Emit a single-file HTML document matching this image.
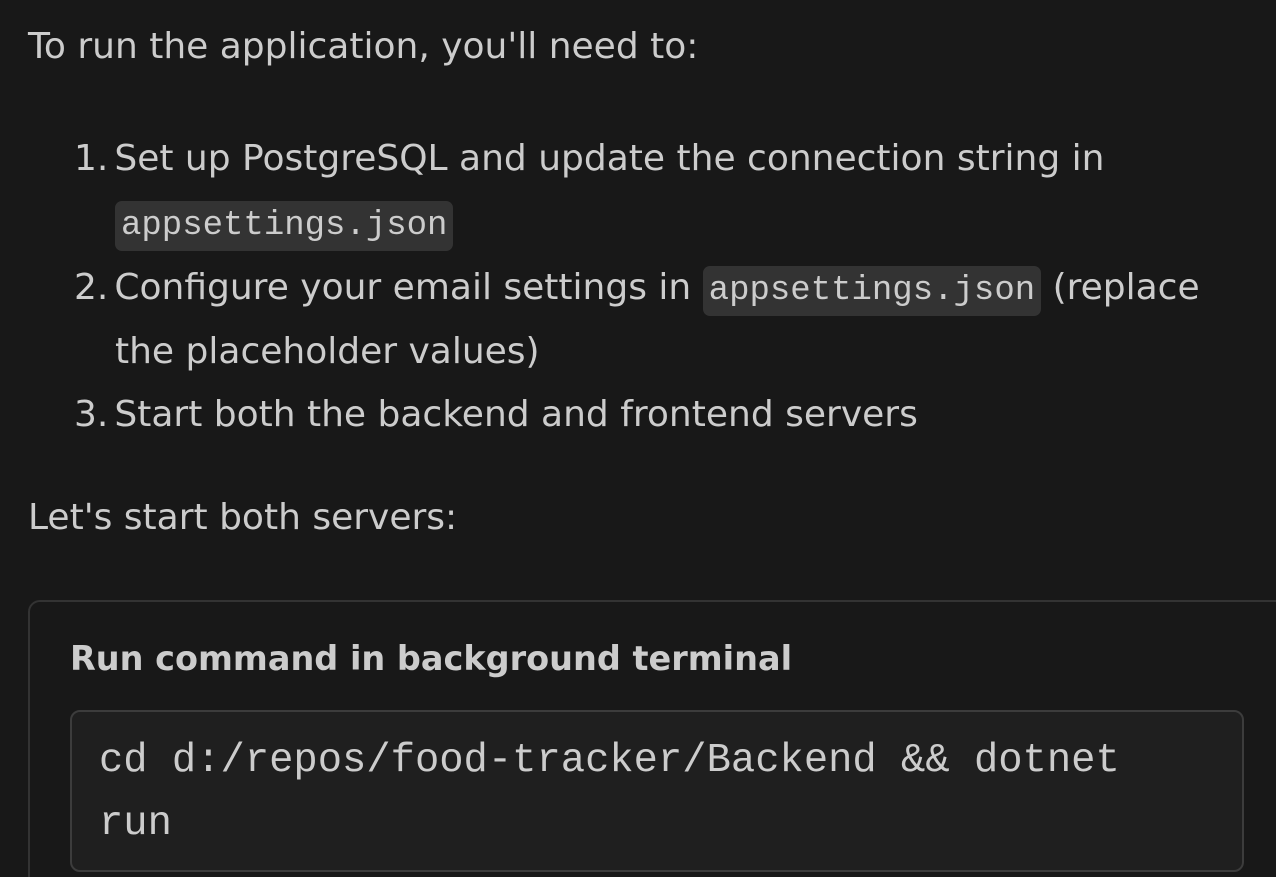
<!DOCTYPE html><html><head><style>
html,body{margin:0;width:1276px;height:877px;overflow:hidden;background:#181818;}
body{color:#cccccc;font-family:"DejaVu Sans","Liberation Sans",sans-serif;font-size:36px;position:relative}
.p{position:absolute;left:28px;white-space:nowrap}
.l{position:absolute;white-space:nowrap}
code{font-family:"Liberation Mono",monospace;font-size:34px;background:#333333;border-radius:7px;padding:6px 6px;}
.box{position:absolute;left:28px;top:600px;width:1270px;height:290px;border:2px solid #333;border-radius:12px;background:#181818}
.h{position:absolute;left:40px;top:37px;font-weight:bold;font-size:33.5px;color:#cccccc}
.cb{position:absolute;left:40px;top:108px;width:1170px;height:158px;border:2px solid #3c3c3c;border-radius:10px;background:#1f1f1f;font-family:"Liberation Mono",monospace;font-size:40.5px;color:#cccccc}
.cb div{position:absolute;left:27px}
</style></head><body>
<div class="p" style="top:26px">To run the application, you'll need to:</div>
<div class="l" style="left:74px;top:138px">1.<span style="margin-left:6px">Set up PostgreSQL and update the connection string in</span></div>
<div class="l" style="left:115px;top:202px"><code>appsettings.json</code></div>
<div class="l" style="left:74px;top:267px">2.<span style="margin-left:6px">Configure your email settings in <code>appsettings.json</code> (replace</span></div>
<div class="l" style="left:115px;top:331px">the placeholder values)</div>
<div class="l" style="left:74px;top:394px">3.<span style="margin-left:6px">Start both the backend and frontend servers</span></div>
<div class="p" style="top:497px">Let's start both servers:</div>
<div class="box">
<div class="h">Run command in background terminal</div>
<div class="cb"><div style="top:26px">cd d:/repos/food-tracker/Backend &amp;&amp; dotnet</div><div style="top:89px">run</div></div>
</div>
</body></html>
